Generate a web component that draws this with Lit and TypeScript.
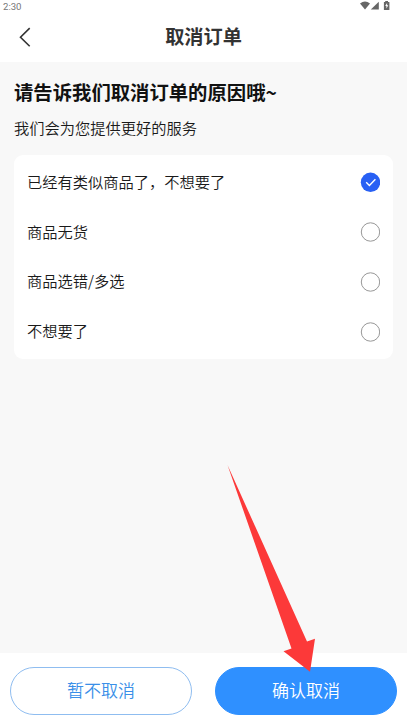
import { LitElement, html, css } from "lit";
import { customElement, property, state } from "lit/decorators.js";

@customElement("status-bar")
class StatusBar extends LitElement {
  static styles = css`
    :host {
      display: flex;
      justify-content: space-between;
      height: 12px;
      padding: 0 17px 0 3px;
      color: #777;
      font: 9.6px/13px Roboto, sans-serif;
    }
    .icons {
      display: block;
    }
  `;
  render() {
    return html`
      <span>2:30</span>
      <svg class="icons" width="30" height="12" viewBox="0 0 30 12" fill="#666">
        <path d="M0 3.5Q5 -0.7 10 3.5L5 9.4Z" />
        <path d="M18.8 1.7V9.6H10.8Z" />
        <path d="M25.2 1.1H28V2H29.4V10H23.9V2H25.2Z" />
        <path d="M27.1 3L25.2 6H26.4V8.5L28.3 5.3H27.1Z" fill="#fff" />
      </svg>
    `;
  }
}

@customElement("reason-option")
class ReasonOption extends LitElement {
  @property() label = "";
  @property({ type: Boolean }) checked = false;

  static styles = css`
    :host {
      display: flex;
      align-items: center;
      justify-content: space-between;
      flex: 1;
      padding: 0 13px;
      cursor: pointer;
    }
    .label {
      padding-bottom: 3px;
    }
    .mark {
      display: block;
    }
  `;
  render() {
    return html`
      <span class="label">${this.label}</span>
      <svg class="mark" width="20" height="20" viewBox="0 0 20 20" fill="none">
        ${this.checked
          ? html`<svg>
              <circle cx="10.5" cy="10.3" r="9.7" fill="#2860f4" />
              <path d="M6.2 10.3L9.4 13.4L15.4 7.2" stroke="#fff" stroke-width="1.4" />
            </svg>`
          : html`<svg><circle cx="10.5" cy="10" r="9.2" stroke="#8c8c8c" stroke-width="0.9" /></svg>`}
      </svg>
    `;
  }
}

@customElement("app-root")
class AppRoot extends LitElement {
  @state() private selected = 0;
  private reasons = ["已经有类似商品了，不想要了", "商品无货", "商品选错/多选", "不想要了"];

  static styles = css`
    :host {
      display: flex;
      flex-direction: column;
      position: relative;
      height: 100vh;
      overflow: hidden;
      background: #f8f8f8;
      color: #1a1a1a;
      font-family: "Noto Sans CJK SC", sans-serif;
    }
    .top {
      height: 62px;
      background: #fff;
    }
    .nav {
      display: grid;
      grid-template-columns: 50px 1fr 50px;
      align-items: center;
      height: 50px;
    }
    .back {
      display: block;
      margin-left: 18px;
    }
    .title {
      margin: 0;
      padding-bottom: 2px;
      text-align: center;
      font-size: 19.2px;
      line-height: 28px;
      font-weight: 700;
      color: #333;
    }
    .content {
      flex: 1;
      padding: 15px 14px 0;
    }
    .question {
      margin: 0;
      font-size: 19.35px;
      line-height: 30px;
      font-weight: 700;
      color: #111;
    }
    .hint {
      margin: 8px 0 0;
      font-size: 15.25px;
      line-height: 24px;
      font-weight: 350;
    }
    .card {
      display: flex;
      flex-direction: column;
      box-sizing: border-box;
      height: 204px;
      margin-top: 16px;
      padding: 2.5px 0;
      border-radius: 9px;
      background: #fff;
      font-size: 15.25px;
      line-height: 24px;
      font-weight: 350;
    }
    .footer {
      display: grid;
      grid-template-columns: 1fr 1fr;
      gap: 23px;
      box-sizing: border-box;
      height: 71px;
      padding: 14px 10px 9px;
      background: #fff;
    }
    .button {
      box-sizing: border-box;
      padding: 0 0 3px;
      border: 1px solid #2f90ff;
      border-radius: 24px;
      background: #2f90ff;
      color: #fff;
      font: 350 17px/24px "Noto Sans CJK SC", sans-serif;
    }
    .outline {
      padding-bottom: 2px;
      border-color: #8fbdf0;
      background: #fff;
      color: #3a8fe8;
    }
    .pointer {
      position: absolute;
      left: 227px;
      top: 464px;
      pointer-events: none;
    }
  `;
  render() {
    return html`
      <header class="top">
        <status-bar></status-bar>
        <div class="nav">
          <svg class="back" width="14" height="22" viewBox="0 0 14 22" fill="none">
            <path d="M11.7 2.1L2.5 11.2L11.7 20.3" stroke="#333" stroke-width="1.6" />
          </svg>
          <h1 class="title">取消订单</h1>
        </div>
      </header>
      <main class="content">
        <h2 class="question">请告诉我们取消订单的原因哦~</h2>
        <p class="hint">我们会为您提供更好的服务</p>
        <div class="card">
          ${this.reasons.map(
            (reason, i) => html`<reason-option
              .label=${reason}
              .checked=${i === this.selected}
              @click=${() => (this.selected = i)}
            ></reason-option>`
          )}
        </div>
      </main>
      <footer class="footer">
        <button class="button outline">暂不取消</button>
        <button class="button">确认取消</button>
      </footer>
      <svg class="pointer" width="90" height="210" viewBox="0 0 90 210">
        <path d="M0.5 1L80 177.5L88 174.8L83 207.8L56.5 187.3L64.5 184.5Z" fill="#fc3939" />
      </svg>
    `;
  }
}
